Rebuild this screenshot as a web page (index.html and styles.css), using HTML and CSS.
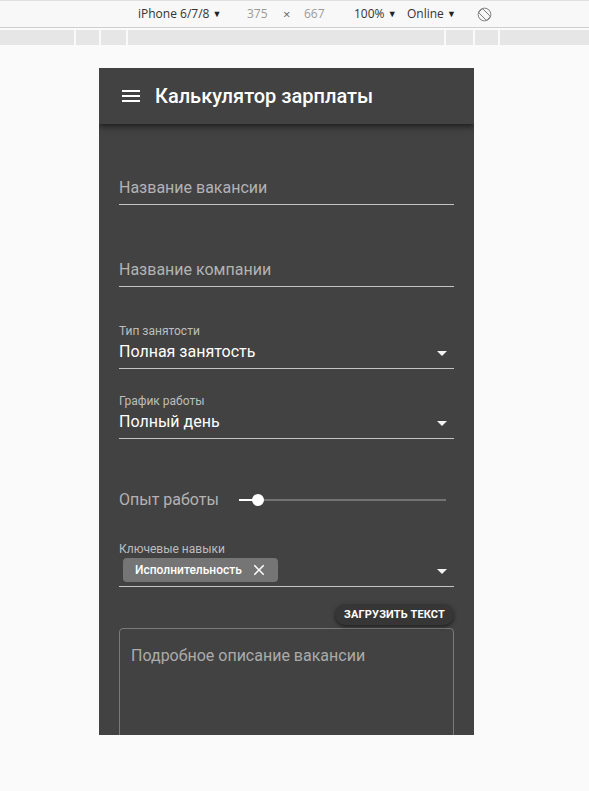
FILE: index.html
```html
<!DOCTYPE html>
<html lang="ru">
<head>
<meta charset="utf-8">
<title>Калькулятор зарплаты</title>
<link rel="stylesheet" href="styles.css">
</head>
<body>
<div class="devbar">
  <span class="gap"></span>
  <span class="dev-item">iPhone 6/7/8 <span class="caret">▼</span></span>
  <span class="dev-item dim">375</span>
  <span class="dev-item dim x">×</span>
  <span class="dev-item dim">667</span>
  <span class="dev-item">100% <span class="caret">▼</span></span>
  <span class="dev-item">Online <span class="caret">▼</span></span>
  <span class="dev-item">
    <svg class="rotate" width="15" height="15" viewBox="0 0 16 16">
      <circle cx="8" cy="8" r="6.8" fill="none" stroke="#7a7a7a" stroke-width="1"/>
      <rect x="5" y="2" width="6" height="12" rx="1" fill="none" stroke="#7a7a7a" stroke-width="1" transform="rotate(-45 8 8)"/>
    </svg>
  </span>
</div>
<div class="ruler">
  <span class="seg s1"></span><span class="seg s2"></span><span class="seg s3"></span><span class="seg s4"></span><span class="seg s5"></span><span class="seg s6"></span><span class="seg s7"></span>
</div>
<div class="stage">
  <div class="phone">
    <header class="appbar">
      <svg class="menu" width="24" height="24" viewBox="0 0 24 24"><path fill="#fff" d="M3 18h18v-2H3v2zm0-5h18v-2H3v2zm0-7v2h18V6H3z"/></svg>
      <h1 class="title">Калькулятор зарплаты</h1>
    </header>
    <div class="form">
      <div class="field f1"><div class="value placeholder">Название вакансии</div></div>
      <div class="field f2"><div class="value placeholder">Название компании</div></div>
      <div class="field select f3">
        <div class="label">Тип занятости</div>
        <div class="value row"><span>Полная занятость</span><span class="arrow"></span></div>
      </div>
      <div class="field select f4">
        <div class="label">График работы</div>
        <div class="value row"><span>Полный день</span><span class="arrow"></span></div>
      </div>
      <div class="slider-row">
        <span class="slider-label">Опыт работы</span>
        <div class="slider">
          <div class="track"><div class="fill"></div></div>
          <div class="thumb"></div>
        </div>
      </div>
      <div class="field chips">
        <div class="label">Ключевые навыки</div>
        <div class="chip-row">
          <span class="chip">Исполнительность
            <svg class="chip-x" width="18" height="18" viewBox="0 0 24 24"><path fill="#fff" d="M19 6.41L17.59 5 12 10.59 6.41 5 5 6.41 10.59 12 5 17.59 6.41 19 12 13.41 17.59 19 19 17.59 13.41 12z"/></svg>
          </span>
          <span class="arrow"></span>
        </div>
      </div>
      <div class="btn-row"><button class="upload">Загрузить текст</button></div>
      <div class="textarea"><span class="placeholder">Подробное описание вакансии</span></div>
    </div>
  </div>
</div>
</body>
</html>
```
FILE: styles.css
```css
html, body {
  margin: 0;
  padding: 0;
  background: #fafafa;
}

body {
  font-family: Roboto, "Noto Sans", sans-serif;
}

/* device toolbar */
.devbar {
  height: 26px;
  background: #f8f8f8;
  border-top: 1px solid #e0e0e0;
  border-bottom: 1px solid #cfcfcf;
  display: grid;
  grid-template-columns: 138px 109px 36px 21px 50px 53px 70px 20px;
  align-items: center;
  font-family: "Open Sans", "Noto Sans", sans-serif;
  font-size: 12px;
  color: #333;
}

.dev-item {
  white-space: nowrap;
  line-height: 16px;
}

.dev-item.dim {
  color: #9a9a9a;
}

.dev-item.x {
  font-size: 13px;
  color: #666;
}

.caret {
  font-size: 9px;
  color: #222;
  vertical-align: 1px;
}

.rotate {
  display: block;
  margin-top: 1px;
}

.ruler {
  margin-top: 2px;
  height: 15px;
  display: flex;
  gap: 2px;
  background: #fafafa;
}

.seg {
  background: #e6e6e6;
}
.s1 { width: 74px; }
.s2 { width: 23px; }
.s3 { width: 25px; }
.s4 { width: 316px; }
.s5 { width: 27px; }
.s6 { width: 23px; }
.s7 { flex: 1; }

/* device */
.stage {
  padding: 23px 0 0 99px;
}

.phone {
  width: 375px;
  height: 667px;
  background: #424242;
  overflow: hidden;
}

.appbar {
  position: relative;
  z-index: 1;
  height: 56px;
  display: flex;
  align-items: center;
  padding-left: 20px;
  background: #424242;
  box-shadow: 0 2px 4px -1px rgba(0,0,0,.35), 0 4px 5px 0 rgba(0,0,0,.2), 0 1px 10px 0 rgba(0,0,0,.18);
}

.menu {
  display: block;
  flex: none;
}

.title {
  margin: 0 0 0 12px;
  font-size: 20px;
  font-weight: 500;
  line-height: 56px;
  color: #fff;
}

.form {
  padding: 0 20px;
  font-size: 16px;
  color: #fff;
}

.field {
  border-bottom: 1px solid #c4c4c4;
}

.value {
  line-height: 20px;
  padding-bottom: 6px;
}

.placeholder {
  color: #b3b3b3;
}

.f1 { margin-top: 54px; }
.f2 { margin-top: 55px; }

.select .value {
  margin-top: 3px;
  padding-bottom: 6px;
}
.f3 { margin-top: 36px; }
.f4 { margin-top: 24px; }

.label {
  font-size: 12px;
  line-height: 16px;
  color: #bdbdbd;
}

.row {
  display: flex;
  align-items: center;
  justify-content: space-between;
}

.arrow {
  width: 0;
  height: 0;
  border-left: 5px solid transparent;
  border-right: 5px solid transparent;
  border-top: 5px solid #f2f2f2;
  margin-right: 7px;
  margin-top: 2px;
}

.slider-row {
  margin-top: 50px;
  height: 22px;
  display: flex;
  align-items: center;
}

.slider-label {
  width: 120px;
  flex: none;
  color: #b3b3b3;
  line-height: 20px;
}

.slider {
  position: relative;
  flex: 1;
  margin-right: 8px;
  height: 12px;
  display: flex;
  align-items: center;
}

.track {
  width: 100%;
  height: 2px;
  background: #737373;
}

.fill {
  width: 19px;
  height: 2px;
  background: #fff;
}

.thumb {
  position: absolute;
  left: 13px;
  top: 0;
  width: 12px;
  height: 12px;
  border-radius: 50%;
  background: #fff;
}

.chips {
  margin-top: 30px;
}

.chip-row {
  margin-top: 1px;
  padding-bottom: 4px;
  display: flex;
  align-items: center;
  justify-content: space-between;
}

.chip {
  margin-left: 4px;
  height: 24px;
  display: inline-flex;
  align-items: center;
  padding: 0 10px 0 12px;
  border-radius: 4px;
  background: #757575;
  font-size: 12px;
  font-weight: 500;
  color: #fff;
}

.chip-x {
  display: block;
  margin-left: 8px;
}

.btn-row {
  margin-top: 17px;
  display: flex;
  justify-content: flex-end;
}

.upload {
  height: 21px;
  padding: 0 9px;
  border: none;
  border-radius: 11px;
  background: #363636;
  box-shadow: 0 2px 3px rgba(0,0,0,.35), 0 1px 5px rgba(0,0,0,.2);
  font-family: Roboto, "Noto Sans", sans-serif;
  font-size: 11px;
  font-weight: 700;
  letter-spacing: 0.15px;
  text-transform: uppercase;
  color: #fff;
}

.textarea {
  margin-top: 3px;
  height: 220px;
  border: 1px solid #7a7a7a;
  border-radius: 4px;
  padding: 17px 11px 16px;
  line-height: 20px;
}

.textarea .placeholder {
  color: #ababab;
}
```
